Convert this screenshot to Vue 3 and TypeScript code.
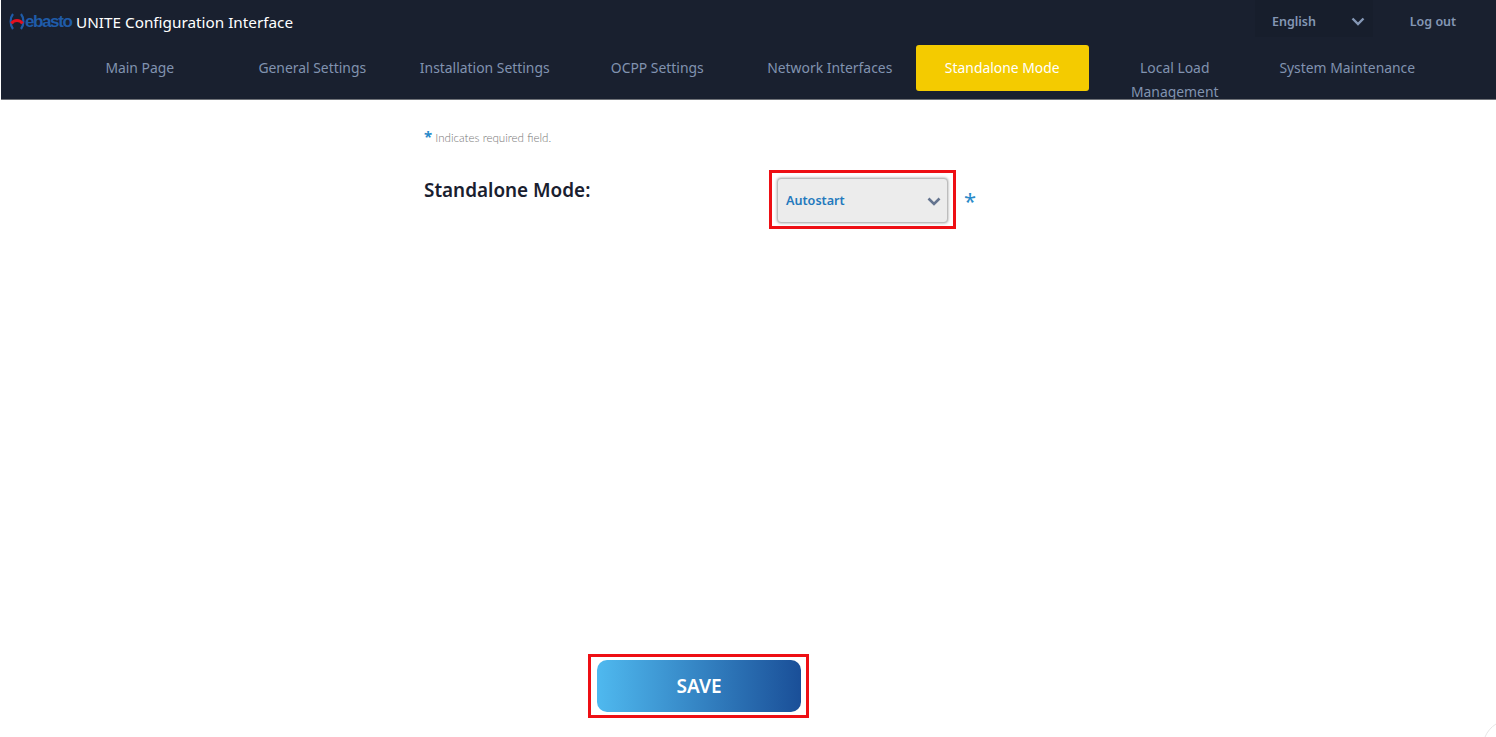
<template>
  <div class="page">
    <header class="top">
      <div class="top-row">
        <div class="brand">
          <span class="logo">
            <svg class="logo-mark" width="16" height="17" viewBox="0 0 16 17">
              <path d="M4 1 C0.8 5 0.8 12 4 16" fill="none" stroke="#1f5ba8" stroke-width="2.2" />
              <path d="M12 1 C15.2 5 15.2 12 12 16" fill="none" stroke="#1f5ba8" stroke-width="2.2" />
              <path d="M2.5 10.5 C5 6.5 11 6.5 13.5 10.5" fill="none" stroke="#e3101f" stroke-width="3" />
            </svg>
            <span class="logo-text">ebasto</span>
          </span>
          <span class="brand-title">UNITE Configuration Interface</span>
        </div>
        <div class="top-actions">
          <div class="lang">
            <span>English</span>
            <svg width="14" height="9" viewBox="0 0 14 9">
              <path d="M1.5 1.5 L7 7 L12.5 1.5" fill="none" stroke="#8497b5" stroke-width="2.4" />
            </svg>
          </div>
          <div class="logout">Log out</div>
        </div>
      </div>
      <nav class="nav">
        <div
          v-for="item in navItems"
          :key="item"
          :class="['nav-item', { active: item === activeItem }]"
        >
          <span class="nav-label">{{ item }}</span>
        </div>
      </nav>
    </header>

    <main class="content">
      <p class="required-note"><span class="star">*</span> Indicates required field.</p>

      <div class="form-row">
        <label class="field-label">Standalone Mode:</label>
        <div class="highlight select-box">
          <div class="select">
            <span>{{ mode }}</span>
            <svg class="select-arrow" width="14" height="9" viewBox="0 0 14 9">
              <path d="M1.5 1.5 L7 7 L12.5 1.5" fill="none" stroke="#64748f" stroke-width="2.6" />
            </svg>
          </div>
        </div>
        <span class="field-star">*</span>
      </div>

      <div class="save-row">
        <div class="highlight save-box">
          <button class="save" type="button">SAVE</button>
        </div>
      </div>
    </main>

    <svg class="corner" width="12" height="14" viewBox="0 0 12 14">
      <path d="M1 14 C3 9 7 4 12 1" fill="none" stroke="#e6e6e6" stroke-width="1" />
    </svg>
  </div>
</template>

<script setup lang="ts">
const navItems: string[] = [
  'Main Page',
  'General Settings',
  'Installation Settings',
  'OCPP Settings',
  'Network Interfaces',
  'Standalone Mode',
  'Local Load Management',
  'System Maintenance',
];
const activeItem = 'Standalone Mode';
const mode = 'Autostart';
</script>

<style>
html,
body {
  margin: 0;
  background: #fff;
}
</style>

<style scoped>
.page {
  position: relative;
  height: 737px;
  overflow: hidden;
  background: #fff;
  font-family: "Noto Sans", "Open Sans", sans-serif;
}

.top {
  height: 99px;
  margin-left: 1px;
  overflow: hidden;
  background: #19202f;
  border-bottom: 1px solid #6f7278;
}

.top-row {
  display: flex;
  justify-content: space-between;
  height: 45px;
}

.brand {
  display: flex;
  align-items: center;
  padding-left: 8px;
  padding-bottom: 2px;
}

.logo {
  display: flex;
  align-items: center;
  width: 67px;
}

.logo-text {
  font-family: "Liberation Sans", sans-serif;
  font-size: 17px;
  font-weight: 700;
  letter-spacing: -1.4px;
  color: #1f5ba8;
}

.brand-title {
  font-size: 15.3px;
  color: #fff;
}

.top-actions {
  display: flex;
  align-items: stretch;
  padding-right: 3px;
}

.lang {
  display: flex;
  align-items: center;
  justify-content: space-between;
  box-sizing: border-box;
  width: 118px;
  height: 37px;
  padding: 5px 8px 0 17px;
  background: #171e2c;
  font-size: 12.5px;
  font-weight: 600;
  color: #8497b5;
}

.logout {
  display: flex;
  align-items: center;
  justify-content: center;
  width: 120px;
  height: 37px;
  padding-top: 5px;
  box-sizing: border-box;
  font-size: 12.5px;
  font-weight: 600;
  color: #8497b5;
}

.nav {
  display: grid;
  grid-template-columns: repeat(8, 172.5px);
  padding-left: 52.5px;
}

.nav-item {
  box-sizing: border-box;
  height: 46px;
  padding: 11px 14px 0;
  border-radius: 3px;
  font-size: 13.9px;
  line-height: 24px;
  text-align: center;
  color: #8193b0;
}

.nav-item.active {
  background: #f4cb00;
  color: #fff;
}

.content {
  padding-left: 424px;
}

.required-note {
  margin: 0;
  padding-top: 27px;
  font-family: "Lato", sans-serif;
  font-size: 11.6px;
  font-weight: 300;
  line-height: 18px;
  color: #777;
}

.star {
  font-family: "Noto Sans", sans-serif;
  font-size: 15px;
  font-weight: 700;
  color: #2a8ac9;
}

.form-row {
  display: flex;
  align-items: flex-start;
  margin-top: 23px;
}

.field-label {
  width: 345px;
  padding-top: 8px;
  font-size: 18.9px;
  font-weight: 600;
  line-height: 24px;
  color: #19202f;
}

.highlight {
  box-sizing: border-box;
  border: 3px solid #ee0f14;
}

.select-box {
  width: 187px;
  height: 59px;
  padding: 5px 5px 3px;
}

.select {
  display: flex;
  align-items: center;
  justify-content: space-between;
  box-sizing: border-box;
  height: 45px;
  padding: 0 6px 1px 8px;
  background: #ececec;
  border: 1px solid #bdbdbd;
  border-radius: 4px;
  box-shadow: 0 0 3px #999;
  font-size: 12.6px;
  font-weight: 600;
  color: #2379bd;
}

.select-arrow {
  margin-top: 2px;
}

.field-star {
  margin-left: 8px;
  padding-top: 15px;
  font-size: 22px;
  line-height: 30px;
  color: #2a8ac9;
}

.save-row {
  display: flex;
  margin-top: 425px;
  margin-left: 164px;
}

.save-box {
  width: 221px;
  height: 64px;
  padding: 3px 6px;
}

.save {
  display: block;
  width: 204px;
  height: 52px;
  padding: 0;
  border: none;
  border-radius: 10px;
  background: linear-gradient(90deg, #4fb9ef 0%, #1a4f98 100%);
  font-family: inherit;
  font-size: 19px;
  font-weight: 600;
  color: #fff;
}

/* faint arc left in the bottom corner of the capture */
.corner {
  position: absolute;
  right: 0;
  bottom: 0;
}
</style>
